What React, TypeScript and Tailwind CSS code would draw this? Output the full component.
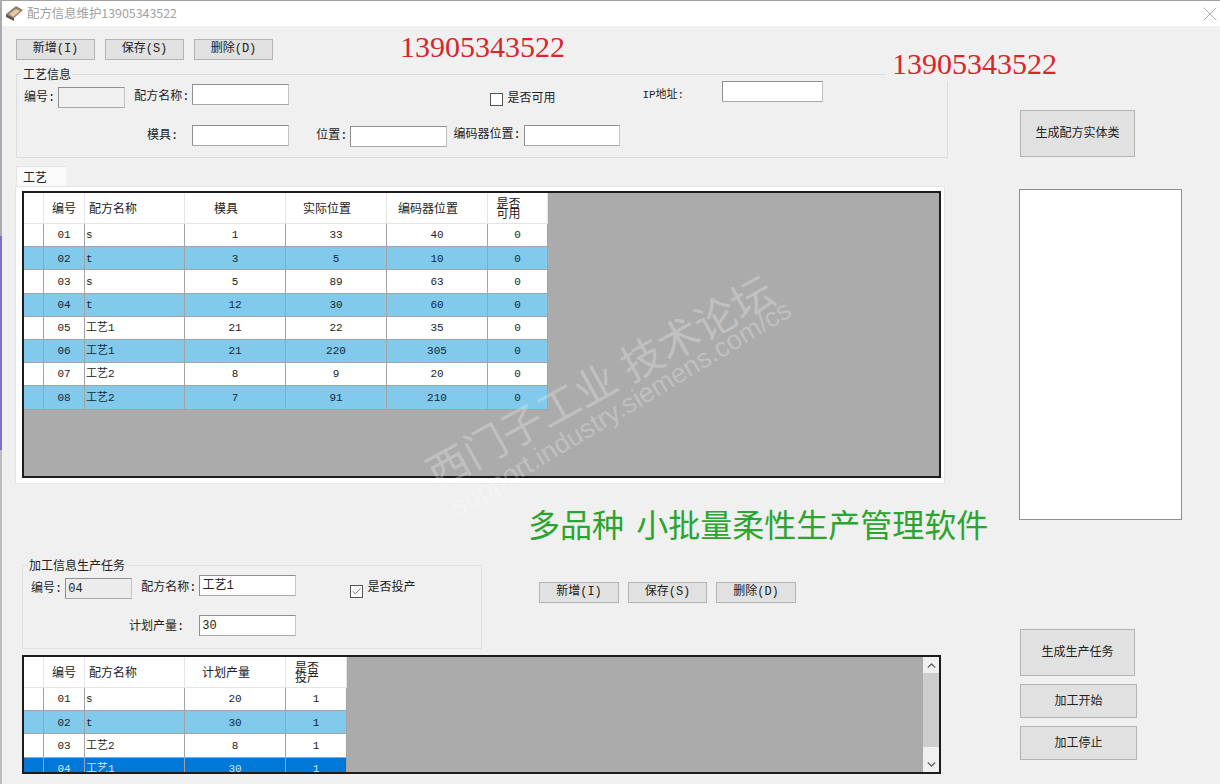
import { Check, ChevronDown, ChevronUp, X } from "lucide-react";

const CJK = "font-['Noto_Sans_CJK_SC','Liberation_Sans',sans-serif]";
const MONO = "font-['Liberation_Mono','Noto_Sans_CJK_SC',monospace]";

const Btn = ({ label, className }: { label: string; className: string }) => (
  <button className={`flex items-center justify-center border border-[#b4b4b4] bg-[#e1e1e1] text-[12px] text-[#222] ${MONO} ${className}`}>
    {label}
  </button>
);

const Field = ({ value, className }: { value?: string; className: string }) => (
  <div className={`flex h-[21px] items-center border border-[#8f8f8f] border-r-[#c4c4c4] border-b-[#a8a8a8] pl-[2px] text-[12px] text-[#222] ${MONO} ${className}`}>
    {value}
  </div>
);

type Col = { title: string[]; width: string; header: string; cell: string };

const recipeCols: Col[] = [
  { title: ["编号"], width: "w-[41px]", header: "justify-center", cell: "justify-center" },
  { title: ["配方名称"], width: "w-[100px]", header: "pl-[4px]", cell: "pl-px" },
  { title: ["模具"], width: "w-[101px]", header: "justify-center pr-[18px]", cell: "justify-center" },
  { title: ["实际位置"], width: "w-[101px]", header: "justify-center pr-[18px]", cell: "justify-center" },
  { title: ["编码器位置"], width: "w-[101px]", header: "justify-center pr-[18px]", cell: "justify-center" },
  { title: ["是否", "可用"], width: "w-[60px]", header: "justify-center pr-[18px]", cell: "justify-center" },
];

const recipeRows = [
  ["01", "s", "1", "33", "40", "0"],
  ["02", "t", "3", "5", "10", "0"],
  ["03", "s", "5", "89", "63", "0"],
  ["04", "t", "12", "30", "60", "0"],
  ["05", "工艺1", "21", "22", "35", "0"],
  ["06", "工艺1", "21", "220", "305", "0"],
  ["07", "工艺2", "8", "9", "20", "0"],
  ["08", "工艺2", "7", "91", "210", "0"],
];

const taskCols: Col[] = [
  { title: ["编号"], width: "w-[41px]", header: "justify-center", cell: "justify-center" },
  { title: ["配方名称"], width: "w-[100px]", header: "pl-[4px]", cell: "pl-px" },
  { title: ["计划产量"], width: "w-[101px]", header: "justify-center pr-[18px]", cell: "justify-center" },
  { title: ["是否", "投产"], width: "w-[61px]", header: "justify-center pr-[18px]", cell: "justify-center" },
];

const taskRows = [
  ["01", "s", "20", "1"],
  ["02", "t", "30", "1"],
  ["03", "工艺2", "8", "1"],
  ["04", "工艺1", "30", "1"],
];

const DataGrid = ({ cols, rows, selected, h }: { cols: Col[]; rows: string[][]; selected?: number; h: string }) => (
  <div className={`w-[919px] overflow-hidden border-2 border-[#1c1c1c] bg-[#ababab] ${h}`}>
    <div className="flex h-[31px] w-fit bg-white">
      <div className="w-[20px] border-r border-b border-[#e4e4e4]" />
      {cols.map((c) => (
        <div key={c.title.join("")} className={`flex items-center border-r border-b border-[#e4e4e4] text-[12px] text-[#222] ${c.width} ${c.header}`}>
          <span className={c.title.length > 1 ? "leading-[10px]" : ""}>
            {c.title.map((t) => (
              <span key={t} className="block">{t}</span>
            ))}
          </span>
        </div>
      ))}
    </div>
    {rows.map((row, i) => {
      const bg = i === selected ? "bg-[#0078d7] text-[#cfe8fb]" : i % 2 ? "bg-[#82caeb] text-[#10283a]" : "bg-white text-[#222]";
      return (
        <div key={row[0]} className={`flex h-[23.2px] w-fit ${bg}`}>
          <div className="w-[20px] border-r border-b border-[#a3a3a3]" />
          {cols.map((c, j) => (
            <div key={j} className={`flex items-center border-r border-b border-[#a3a3a3] pt-px text-[11px] ${MONO} ${c.width} ${c.cell}`}>
              {row[j]}
            </div>
          ))}
        </div>
      );
    })}
  </div>
);

export default function App() {
  return (
    <div className={`relative h-[784px] w-[1220px] overflow-hidden bg-[#f0f0f0] ${CJK}`}>
      {/* desktop showing at the window edge */}
      <div className="absolute top-0 left-0 flex h-full w-[2px] flex-col">
        <div className="h-[236px] bg-[#a9abb3]" />
        <div className="h-[214px] bg-[#7a70c8]" />
        <div className="h-[334px] bg-[#b9bbbf]" />
      </div>

      <div className="flex h-[26px] items-center border-t border-[#a0a4a6] bg-white pr-[4px] pl-[6px]">
        <svg width="17" height="15" viewBox="0 0 17 15">
          <path d="M0 8 10 0l7 4-9 8z" fill="#8d8172" />
          <path d="M3 8l7-5 4 2-7 6z" fill="#e9c9a0" />
          <path d="M0 8l8 4v3L0 11z" fill="#5c5650" />
        </svg>
        <span className="ml-[4px] text-[12.4px] text-[#a0a0a0]">配方信息维护13905343522</span>
        <X className="-mr-[6px] ml-auto text-[#8a8a8a]" size={24} strokeWidth={0.7} />
      </div>

      <div className="flex">
        <div className="w-[1019px] shrink-0">
          <div className="mt-[13px] ml-[16px] flex gap-[10px]">
            <Btn label="新增(I)" className="h-[21px] w-[79px] pb-px" />
            <Btn label="保存(S)" className="h-[21px] w-[79px] pb-px" />
            <Btn label="删除(D)" className="h-[21px] w-[79px] pb-px" />
          </div>

          <div className="relative mt-[14px] ml-[16px] h-[84px] w-[932px] border border-[#dddddd]">
            <span className="absolute -top-[8px] left-[5px] bg-[#f0f0f0] px-px text-[12px] leading-[14px] text-[#222]">工艺信息</span>
            <div className={`flex items-start text-[12px] text-[#222] ${MONO}`}>
              <span className="mt-[15px] ml-[7px] leading-[16px]">编号:</span>
              <Field className="mt-[12px] ml-[3px] w-[67px] bg-[#f0f0f0]" />
              <span className="mt-[14px] ml-[9px] leading-[16px]">配方名称:</span>
              <Field className="mt-[9px] ml-[3px] w-[97px] bg-white" />
              <div className="mt-[18px] ml-[201px] h-[13px] w-[13px] border border-[#555] bg-white" />
              <span className="mt-[16px] ml-[4px] leading-[16px]">是否可用</span>
              <span className="mt-[12px] ml-[87px] text-[11px] leading-[16px]">IP地址:</span>
              <Field className="mt-[6px] ml-[38px] w-[101px] bg-white" />
            </div>
            <div className={`mt-[17px] flex items-start text-[12px] text-[#222] ${MONO}`}>
              <span className="mt-[3px] ml-[130px] leading-[16px]">模具:</span>
              <Field className="ml-[14px] w-[97px] bg-white" />
              <span className="mt-[3px] ml-[27px] leading-[16px]">位置:</span>
              <Field className="mt-px ml-[3px] w-[97px] bg-white" />
              <span className="mt-[2px] ml-[6px] leading-[16px]">编码器位置:</span>
              <Field className="ml-[3px] w-[96px] bg-white" />
            </div>
          </div>

          <div className="mt-[8px] ml-[16px] flex h-[21px] w-[50px] items-center border-t border-l border-[#e4e4e4] bg-[#fafafa] pl-[6px] text-[12px] text-[#222]">
            工艺
          </div>
          <div className="-mt-px ml-[15px] h-[298px] w-[930px] border border-[#e4e4e4] bg-white pt-[4px] pl-[6px]">
            <DataGrid cols={recipeCols} rows={recipeRows} h="h-[287px]" />
          </div>

          <div className="mt-[21px] ml-[528px] text-[32px] leading-[36px] [word-spacing:5px] whitespace-nowrap text-[#2aa52f]">多品种 小批量柔性生产管理软件</div>

          <div className="mt-[24px] ml-[22px] flex items-start">
            <div className={`relative h-[84px] w-[460px] border border-[#e0e0e0] text-[12px] text-[#222] ${MONO}`}>
              <span className={`absolute -top-[8px] left-[5px] bg-[#f0f0f0] px-px leading-[14px] ${CJK}`}>加工信息生产任务</span>
              <div className="flex items-start">
                <span className="mt-[15px] ml-[8px] leading-[16px]">编号:</span>
                <Field value="04" className="mt-[12px] ml-[3px] w-[67px] bg-[#ececec]" />
                <span className="mt-[14px] ml-[9px] leading-[16px]">配方名称:</span>
                <Field value="工艺1" className="mt-[9px] ml-[3px] w-[97px] bg-white" />
                <div className="mt-[19px] ml-[54px] flex h-[13px] w-[13px] items-center justify-center border border-[#555] bg-white">
                  <Check size={11} strokeWidth={1.5} className="text-[#333]" />
                </div>
                <span className="mt-[14px] ml-[4px] leading-[16px]">是否投产</span>
              </div>
              <div className="mt-[16px] flex items-start">
                <span className="mt-[4px] ml-[106px] leading-[16px]">计划产量:</span>
                <Field value="30" className="ml-[15px] w-[97px] bg-white" />
              </div>
            </div>
            <div className="mt-[17px] ml-[57px] flex gap-[9px]">
              <Btn label="新增(I)" className="h-[21px] w-[80px] pb-px" />
              <Btn label="保存(S)" className="h-[21px] w-[79px] pb-px" />
              <Btn label="删除(D)" className="h-[21px] w-[80px] pb-px" />
            </div>
          </div>

          <div className="relative mt-[6px] ml-[22px] w-[919px]">
            <DataGrid cols={taskCols} rows={taskRows} selected={3} h="h-[119px]" />
            <div className="absolute top-[2px] right-[2px] flex h-[115px] w-[16px] flex-col items-center bg-[#f0f0f0] text-[#555]">
              <ChevronUp size={13} strokeWidth={2.5} className="my-[1.5px]" />
              <div className="h-[74px] w-full bg-[#cdcdcd]" />
              <div className="flex-1" />
              <ChevronDown size={13} strokeWidth={2.5} className="my-[1.5px]" />
            </div>
          </div>
        </div>

        <div className="flex w-[170px] flex-col items-start">
          <Btn label="生成配方实体类" className="mt-[84px] ml-px h-[47px] w-[115px] pt-px" />
          <div className="mt-[32px] h-[331px] w-[163px] border border-[#8f8f8f] bg-white" />
          <Btn label="生成生产任务" className="mt-[109px] ml-px h-[47px] w-[115px] pt-px" />
          <Btn label="加工开始" className="mt-[8px] ml-px h-[34px] w-[117px] pt-px" />
          <Btn label="加工停止" className="mt-[8px] ml-px h-[34px] w-[117px] pt-px" />
        </div>
      </div>

      {/* overlays pasted onto the screenshot */}
      <span className="absolute top-[29px] left-[400px] font-['Liberation_Serif',serif] text-[30px] leading-[36px] text-[#d8262c]">13905343522</span>
      <span className="absolute top-[46px] left-[885px] bg-[#f0f0f0] pl-[7px] font-['Liberation_Serif',serif] text-[30px] leading-[36px] text-[#d8262c]">13905343522</span>
      <span className="absolute top-[380px] left-[599px] -translate-x-1/2 -translate-y-1/2 -rotate-[29deg] text-[42px] leading-[48px] [word-spacing:2px] whitespace-nowrap text-white/25">西门子工业 技术论坛</span>
      <span className="absolute top-[408px] left-[621px] -translate-x-1/2 -translate-y-1/2 -rotate-[31deg] font-['Liberation_Sans',sans-serif] text-[27px] leading-[30px] whitespace-nowrap text-white/25">support.industry.siemens.com/cs</span>
    </div>
  );
}
